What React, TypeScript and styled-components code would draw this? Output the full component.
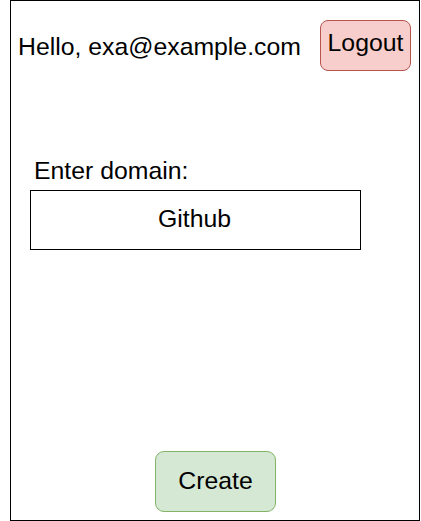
import { createGlobalStyle } from 'styled-components'
import styled from 'styled-components'

const GlobalStyle = createGlobalStyle`
  html, body {
    margin: 0;
    padding: 0;
    background: #ffffff;
  }
  body {
    font-family: 'Liberation Sans', Arial, Helvetica, sans-serif;
    color: #000000;
  }
`

const Frame = styled.div`
  box-sizing: border-box;
  margin-left: 10px;
  width: 410px;
  height: 521px;
  border: 1px solid #000000;
  display: flex;
  flex-direction: column;
  font-size: 24.8px;
  line-height: 28.5px;
`

const Header = styled.div`
  display: flex;
  justify-content: space-between;
  align-items: flex-start;
  padding: 19px 8px 0 7px;
`

const Greeting = styled.span`
  margin-top: 13px;
  white-space: nowrap;
`

const ActionButton = styled.button<{ $fill: string; $stroke: string; $w: number; $h: number; $radius: number }>`
  box-sizing: border-box;
  width: ${({ $w }) => $w}px;
  height: ${({ $h }) => $h}px;
  background: ${({ $fill }) => $fill};
  border: 1px solid ${({ $stroke }) => $stroke};
  border-radius: ${({ $radius }) => $radius}px;
  font: inherit;
  color: #000000;
  padding: 0;
  display: flex;
  align-items: center;
  justify-content: center;
  cursor: pointer;
`

const LogoutButton = styled(ActionButton)`
  align-items: flex-start;
  padding-top: 8px;
`

const DomainField = styled.div`
  display: flex;
  flex-direction: column;
  gap: 4px;
  margin-top: 86px;
  padding-left: 19px;
`

const FieldLabel = styled.label`
  padding-left: 4px;
`

const DomainBox = styled.div`
  box-sizing: border-box;
  width: 331px;
  height: 60px;
  border: 1px solid #000000;
  display: flex;
  align-items: center;
  justify-content: center;
  padding-right: 2px;
`

const Spacer = styled.div`
  flex: 1;
`

const Footer = styled.div`
  display: flex;
  justify-content: center;
  padding: 0 0 8px 1px;
`

export default function App() {
  return (
    <>
      <GlobalStyle />
      <Frame>
        <Header>
          <Greeting>Hello, exa@example.com</Greeting>
          <LogoutButton $fill="#f8cecc" $stroke="#b85450" $w={91} $h={51} $radius={8}>
            Logout
          </LogoutButton>
        </Header>
        <DomainField>
          <FieldLabel>Enter domain:</FieldLabel>
          <DomainBox>Github</DomainBox>
        </DomainField>
        <Spacer />
        <Footer>
          <ActionButton $fill="#d5e8d4" $stroke="#82b366" $w={121} $h={61} $radius={9}>
            Create
          </ActionButton>
        </Footer>
      </Frame>
    </>
  )
}
